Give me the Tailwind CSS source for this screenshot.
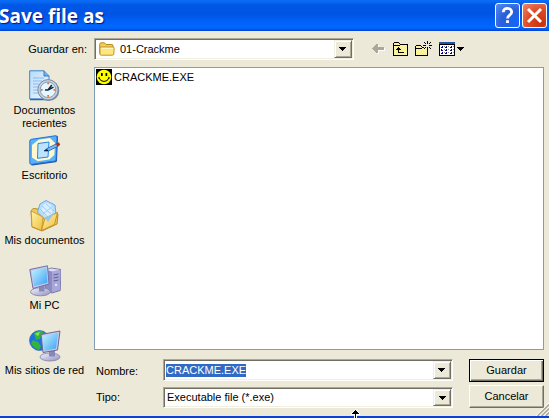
<!DOCTYPE html>
<html lang="es">
<head>
<meta charset="utf-8">
<meta name="viewport" content="width=device-width, initial-scale=1">
<title>Save file as</title>
<script src="https://cdn.jsdelivr.net/npm/@tailwindcss/browser@4"></script>
</head>
<body class="flex min-h-screen flex-col overflow-hidden bg-[#ece9d8] font-['Liberation_Sans',Arial,sans-serif] text-[11px] leading-[13px] text-black">

<header class="flex h-[31px] shrink-0 items-center justify-between bg-[linear-gradient(to_bottom,#0a6cf5_0px,#0a6cf5_1px,#0058e6_5px,#0054e3_14px,#0060f6_21px,#0068ff_27px,#0060f0_29px,#003dd0_31px)] pr-0.5">
  <h1 class="-ml-px pt-px font-['Open_Sans','Noto_Sans',sans-serif] text-[19px] leading-6 font-bold text-white [text-shadow:1px_1px_1px_#0f1089]">Save file as</h1>
  <div class="flex gap-0.5">
    <button type="button" aria-label="Ayuda" class="h-[25px] w-[25px] rounded-[3px] border border-white bg-[radial-gradient(circle_at_80%_85%,#1565f8,#2a5fdc_50%,#5a8cf0)]">
      <svg viewBox="0 0 23 23" class="block h-[23px] w-[23px]" fill="none" stroke="#fff" stroke-width="2.8"><path d="M7.3 8.2C7.3 5.6 9 4.4 11.4 4.4S15.7 5.8 15.7 8c0 3-4.2 3.2-4.2 6.4"/><path d="M11.5 16.2v2.8"/></svg>
    </button>
    <button type="button" aria-label="Cerrar" class="h-[25px] w-[25px] rounded-[3px] border border-white bg-[radial-gradient(circle_at_80%_85%,#c8320a,#dc4a26_50%,#ee8868)]">
      <svg viewBox="0 0 23 23" class="block h-[23px] w-[23px]" stroke="#fff" stroke-width="3"><path d="M5 5l13 13M18 5L5 18"/></svg>
    </button>
  </div>
</header>

<div class="flex items-center pt-[7px] pr-[5px] pb-[7px]">
  <label for="lookin" class="w-[94px] shrink-0 pr-[7px] text-right">Guardar en:</label>
  <div class="relative flex h-[22px] flex-1 border border-t-[#aca899] border-r-white border-b-white border-l-[#aca899] bg-white p-px shadow-[inset_1px_1px_0_#716f64,inset_-1px_-1px_0_#f1efe2]">
    <select id="lookin" class="w-full appearance-none bg-transparent pl-6 outline-none"><option>01-Crackme</option></select>
    <svg viewBox="0 0 16 14" class="pointer-events-none absolute top-[3px] left-1 h-[14px] w-4"><path d="M.7 11.5V2.3Q.7.8 2.2.8h3.3l1.5 1.7h5.8q1.2 0 1.2 1.3V11z" fill="#f0cc58" stroke="#b88a1c"/><path d="M1 12V6.300Q1 5 2.300 5H14Q15.300 5 15.200 6.300L14.800 12Q14.700 13.200 13.500 13.200H2.200Q1 13.200 1 12Z" fill="#ffe67c" stroke="#c09428"/><path d="M2.300 6.300h11.500" stroke="#fffbd0"/></svg>
    <span class="pointer-events-none absolute top-px right-px flex h-[18px] w-[18px] items-center justify-center border border-t-[#f1efe2] border-r-[#716f64] border-b-[#716f64] border-l-[#f1efe2] bg-[#ece9d8] pr-px shadow-[inset_1px_1px_0_#fff,inset_-1px_-1px_0_#aca899]"><svg viewBox="0 0 7 4" class="h-1 w-[7px]" shape-rendering="crispEdges"><path d="M0 0h7v1H6v1H5v1H4v1H3V3H2V2H1V1H0z"/></svg></span>
  </div>
  <div class="flex w-[190px] shrink-0 items-center gap-[6px] pl-[17px]">
    <button type="button" aria-label="Atrás"><svg viewBox="0 0 16 16" class="block h-4 w-4" shape-rendering="crispEdges"><path id="back" fill="#fff" transform="translate(1 1)" d="M1 7h1V6h1V5h1V4h1V3h2v3h6v3H7v3H5v-1H4v-1H3V9H2V8H1z"/><path fill="#aca899" d="M1 7h1V6h1V5h1V4h1V3h2v3h6v3H7v3H5v-1H4v-1H3V9H2V8H1z"/></svg></button>
    <button type="button" aria-label="Subir un nivel"><svg viewBox="0 0 16 16" class="block h-4 w-4" shape-rendering="crispEdges"><defs><pattern id="dither" width="2" height="2" patternUnits="userSpaceOnUse"><path fill="#ffff28" d="M0 0h2v2H0z"/><path fill="#fff8a0" d="M0 0h1v1H0zM1 1h1v1H1z"/></pattern></defs><path d="M0 2h1V1h5v1h1v1h8v12H0z"/><path fill="url(#dither)" d="M1 2h5v1h1v1h7v10H1z"/><path fill="#000" d="M1 4h6v1H1zM5 6h1v1h1v1h1v1H6v2h5v1H5V9H3V8h1V7h1z"/></svg></button>
    <button type="button" aria-label="Crear nueva carpeta"><svg viewBox="0 0 17 16" class="block h-4 w-[17px]" shape-rendering="crispEdges"><path d="M0 5h1V4h5v1h1v1h6v9H0z"/><path fill="url(#dither)" d="M1 5h5v1h1v1h5v7H1z"/><path d="M1 7h6v1H1z"/><path fill="#ece9d8" d="M9 2h6v5H9z"/><path d="M12 0h1v3h-1zM12 6h1v3h-1zM8 4h3v1H8zM14 4h3v1h-3zM9 1h1v1H9zM10 2h1v1h-1zM15 1h1v1h-1zM14 2h1v1h-1zM10 6h1v1h-1zM9 7h1v1H9zM14 6h1v1h-1zM15 7h1v1h-1z"/></svg></button>
    <button type="button" aria-label="Menú Ver" class="flex items-center gap-0.5 pl-px"><svg viewBox="0 0 16 16" class="block h-4 w-4" shape-rendering="crispEdges"><path d="M0 1h16v14H0z"/><path fill="#fff" d="M1 4h14v10H1z"/><path fill="#2454a4" d="M0 1h16v2H0z"/><path fill="#000080" d="M3 5h1v1H3zM2 6h2v1H2zM7 5h1v1H7zM6 6h2v1H6zM12 5h1v1h-1zM11 6h2v1h-2zM2 8h1v1H2zM2 9h2v1H2zM7 8h1v1H7zM6 9h2v1H6zM12 8h1v1h-1zM11 9h2v1h-2zM3 11h1v1H3zM2 12h2v1H2zM7 11h1v1H7zM6 12h2v1H6zM12 11h1v1h-1zM11 12h2v1h-2z"/><path fill="#888" d="M5 5h1v1H5zM9 5h1v1H9zM14 5h1v1h-1zM5 8h1v1H5zM9 8h1v1H9zM14 8h1v1h-1zM5 11h1v1H5zM9 11h1v1H9zM14 11h1v1h-1z"/></svg><svg viewBox="0 0 7 4" class="h-1 w-[7px]" shape-rendering="crispEdges"><path d="M0 0h7v1H6v1H5v1H4v1H3V3H2V2H1V1H0z"/></svg></button>
  </div>
</div>

<div class="flex flex-1 pr-[5px]">
  <nav class="w-[94px] shrink-0 pr-[5px]">
    <a href="#recientes" class="flex h-[65px] flex-col items-center pt-[3px] text-center"><svg viewBox="0 0 32 32" class="h-8 w-8 shrink-0">
      <defs><linearGradient id="doc" x1="0" y1="0" x2="1" y2="1"><stop offset="0" stop-color="#b8dcff"/><stop offset="1" stop-color="#eef8ff"/></linearGradient><linearGradient id="scr" x1="0" y1="0" x2="1" y2="1"><stop offset="0" stop-color="#c4f4ff"/><stop offset="1" stop-color="#38a0f4"/></linearGradient><linearGradient id="gry" x1="0" y1="0" x2="1" y2="1"><stop offset="0" stop-color="#f4f4fc"/><stop offset="1" stop-color="#9090c0"/></linearGradient><linearGradient id="fol" x1="0" y1="0" x2="1" y2="1"><stop offset="0" stop-color="#fff2a8"/><stop offset="1" stop-color="#f0c040"/></linearGradient></defs>
      <path d="M.7.8H15l5 5V29H.7z" fill="url(#doc)" stroke="#4280cc"/><path d="M15 .8V6h5" fill="#78b0ec" stroke="#3478cc"/><path d="M4 8h11M4 11h9M4 14h6M4 17h5M4 20h5M4 23h5" stroke="#8cb8e8"/><path d="M1 29.5h19" stroke="#2868b8" stroke-width="1.5"/>
      <circle cx="19.8" cy="20.6" r="10.5" fill="#7888a0"/><circle cx="19" cy="19.8" r="10.2" fill="#c4d0dc" stroke="#7c8ca4"/><circle cx="19" cy="19.8" r="7.8" fill="#e4f6ff" stroke="#8aa0b8"/><path d="M19 20l5.5-2.8M19 20l3.8-5M16 20h3" stroke="#152838" stroke-width="1.5"/><path d="M18.3 12.5h1.8v1.8h-1.8zM18.3 25h1.8v1.8h-1.8zM11.8 19h1.8v1.8h-1.8zM24.5 19h1.8v1.8h-1.8z" fill="#f46820"/></svg>
      <span class="pt-0.5">Documentos<br>recientes</span></a>
    <a href="#escritorio" class="flex h-[65px] flex-col items-center pt-[3px]"><svg viewBox="0 0 32 32" class="h-8 w-8 shrink-0">
      <path d="M2 6.5Q2 5 3.5 4.8L27 .8q2-.3 2 1.400L28 25.5q0 1.500-1.500 1.800L3.5 30.5Q2 30.600 1.900 29z" fill="#1c50ac"/><path d="M.8 6Q.8 4.600 2.300 4.300L26 .8q2-.3 2 1.400L27 24.500q0 1.500-1.500 1.600L2.600 29.300Q.8 29.500.8 28z" fill="#57b2fa" stroke="#2874d4"/><path d="M3 10L10 4.500l11-1.500L26 8l-.7 12-5 4.500-11.500 1.800L3 22.500z" fill="#fff8cc"/><path d="M9 8.500L20 7l-1 15-10.500 1.300z" fill="#bce4ff" stroke="#2484ec"/><path d="M15 16l3-2.500L28 8.500l1.500 2.500L19.500 16z" fill="#78baf4" stroke="#1c58b4" stroke-width=".8"/><path d="M15 16l3-2 1.500 2z" fill="#112"/><path d="M27 9l3-1.800 1.200 2.700-3 1.600z" fill="#b42c10"/></svg>
      <span class="pt-0.5">Escritorio</span></a>
    <a href="#documentos" class="flex h-[65px] flex-col items-center pt-[3px]"><svg viewBox="0 0 32 32" class="h-8 w-8 shrink-0">
      <path d="M2 11L4 8.500l5 .5L24 11l5 3-1 10-15 7-10-4z" fill="#f0ca58" stroke="#bc8c20"/><path d="M8.500 12L11 4l6-3.500L26 5l1 9-9 8z" fill="#b8dcff" stroke="#70a8e0"/><path d="M12 10l3-6 4-1 5 4-1 7-5 4z" fill="#d8efff"/><path d="M13 6l9 8M11 9l8 8M17 4l8 7M14 14L24 6" stroke="#90c4f4" stroke-width=".8"/><path d="M2.200 11L14 17l-1.500 13.500L3 26.500z" fill="url(#fol)" stroke="#c49424" stroke-width=".8"/><path d="M12.500 30.500L16 18l12.500-5.500-3 12z" fill="url(#fol)" stroke="#b88820" stroke-width=".8"/><path d="M15.500 17.500l9-3.500-5.500 8z" fill="#98c4f0"/></svg>
      <span class="pt-0.5">Mis documentos</span></a>
    <a href="#pc" class="flex h-[65px] flex-col items-center pt-[3px]"><svg viewBox="0 0 32 32" class="h-8 w-8 shrink-0">
      <path d="M17 5l5-2 10 1.500-.8 21L23 28l-7-3z" fill="#8c8cc4" stroke="#64649c" stroke-width=".8"/><path d="M23 6.500l8.500-1.800L31 25l-8 2.500z" fill="#a8a8d8"/><path d="M17 5l5-1.500 9 1.200L23 6.500z" fill="#dcdcf4"/><path d="M24.500 10l5-1M24.500 13l5-1M24.500 16l5-1" stroke="#5c5c98"/><circle cx="27" cy="20" r="1.200" fill="#e0e0ff"/><ellipse cx="11.500" cy="26.800" rx="10" ry="4" fill="url(#gry)" stroke="#8080ac" stroke-width=".8"/><path d="M10 20h5.500v6.500H10z" fill="#8888b8"/><path d="M.8 4.500L18.500.8 20 19 4 23.500z" fill="#c8c8e8" stroke="#7070ac"/><path d="M2.700 6L17.300 2.800l1.200 15L5 21.200z" fill="url(#scr)"/></svg>
      <span class="pt-0.5">Mi PC</span></a>
    <a href="#red" class="flex h-[65px] flex-col items-center pt-[3px]"><svg viewBox="0 0 32 32" class="h-8 w-8 shrink-0">
      <circle cx="10.500" cy="10.500" r="10" fill="#1c74dc" stroke="#1c5cb4" stroke-width=".6"/><path d="M5 3q5-3 8-2l3 4-4 1-1 3-4 1-1-3zM4 10l5 2 3 4-2 4q-6-2-8-7zM13 9l5 1v6l-4-2z" fill="#32b43c"/><path d="M6 4q3-2 5-2l-2 4z" fill="#94e064"/><ellipse cx="21" cy="27" rx="10" ry="4" fill="url(#gry)" stroke="#8080ac" stroke-width=".8"/><path d="M20 21h6v5.500h-6z" fill="#8888b8"/><path d="M12 4.500L31 1l-2.500 19L14 22.500z" fill="#c8c8e8" stroke="#686898"/><path d="M13.700 6L29 3l-2 15.500-11.500 2.300z" fill="url(#scr)"/></svg>
      <span class="pt-0.5">Mis sitios de red</span></a>
  </nav>

  <main class="flex min-w-0 flex-1 flex-col pb-2">
    <ul class="flex-1 border border-[#7f9db9] bg-white">
      <li class="flex items-center gap-0.5 pt-px pl-px"><svg viewBox="0 0 16 16" class="h-4 w-4"><path d="M0 0h16v16H0z"/><circle cx="8" cy="8" r="7.300" fill="#ff0"/><path d="M5 4h1.700v3H5zM9.500 4h1.700v3H9.500z"/><path d="M3 8.500q1 4 5 4t5-4M2.200 9.200l1.400-1M12.400 8.200l1.400 1" fill="none" stroke="#000"/></svg><span>CRACKME.EXE</span></li>
    </ul>
    <form class="mt-[9px] grid grid-cols-[69px_1fr_75px] items-start gap-y-[3px]" onsubmit="return false">
      <label for="fname" class="pt-[6px] pl-0.5">Nombre:</label>
      <div class="mr-4 flex h-[22px] border border-t-[#aca899] border-r-white border-b-white border-l-[#aca899] bg-white p-px shadow-[inset_1px_1px_0_#716f64,inset_-1px_-1px_0_#f1efe2]">
        <input id="fname" type="text" value="CRACKME.EXE" autofocus class="min-w-0 flex-1 pl-px outline-none selection:bg-[#316ac5] selection:text-white">
        <button type="button" aria-label="Mostrar nombres" class="flex w-[18px] items-center justify-center border border-t-[#f1efe2] border-r-[#716f64] border-b-[#716f64] border-l-[#f1efe2] bg-[#ece9d8] pr-px shadow-[inset_1px_1px_0_#fff,inset_-1px_-1px_0_#aca899]"><svg viewBox="0 0 7 4" class="h-1 w-[7px]" shape-rendering="crispEdges"><path d="M0 0h7v1H6v1H5v1H4v1H3V3H2V2H1V1H0z"/></svg></button>
      </div>
      <button type="submit" class="h-[23px] border border-black bg-[#ece9d8] shadow-[inset_1px_1px_0_#fff,inset_-1px_-1px_0_#716f64,inset_-2px_-2px_0_#aca899]">Guardar</button>
      <label for="ftype" class="pt-[6px] pl-0.5">Tipo:</label>
      <div class="relative mt-0.5 mr-4 flex h-[21px] border border-t-[#aca899] border-r-white border-b-white border-l-[#aca899] bg-white p-px shadow-[inset_1px_1px_0_#716f64,inset_-1px_-1px_0_#f1efe2]">
        <select id="ftype" class="w-full appearance-none bg-transparent pl-0.5 outline-none"><option>Executable file (*.exe)</option></select>
        <span class="pointer-events-none absolute top-px right-px bottom-px flex w-[18px] items-center justify-center border border-t-[#f1efe2] border-r-[#716f64] border-b-[#716f64] border-l-[#f1efe2] bg-[#ece9d8] shadow-[inset_1px_1px_0_#fff,inset_-1px_-1px_0_#aca899]"><svg viewBox="0 0 7 4" class="h-1 w-[7px]" shape-rendering="crispEdges"><path d="M0 0h7v1H6v1H5v1H4v1H3V3H2V2H1V1H0z"/></svg></span>
      </div>
      <button type="button" class="h-[23px] border border-t-white border-r-[#716f64] border-b-[#716f64] border-l-white bg-[#ece9d8] shadow-[inset_-1px_-1px_0_#aca899]">Cancelar</button>
    </form>
  </main>
</div>
<footer class="relative h-0.5 shrink-0 bg-[#0842d8]">
  <svg viewBox="0 0 13 13" class="absolute right-0 bottom-0.5 h-[13px] w-[13px]"><path d="M0 13L13 0M4 13l9-9M8 13l5-5" stroke="#fff" stroke-width="1.200"/><path d="M1.500 13L13 1.500M5.500 13L13 5.500M9.500 13L13 9.500" stroke="#aca899" stroke-width="1.600"/></svg>
  <svg viewBox="0 0 9 9" class="absolute bottom-0 left-[351px] h-[9px] w-[9px]" shape-rendering="crispEdges"><path fill="#fff" d="M4 0h1v1h1v1h1v1h1v1h1v2H6v3H3V6H0V4h1V3h1V2h1V1h1z"/><path d="M4 1h1v1h1v1h1v1h1v1H5v4H4V5H1V4h1V3h1V2h1z"/></svg>
</footer>
<script>
  const nameField = document.getElementById('fname');
  nameField.focus();
  nameField.select();
</script>
</body>
</html>
